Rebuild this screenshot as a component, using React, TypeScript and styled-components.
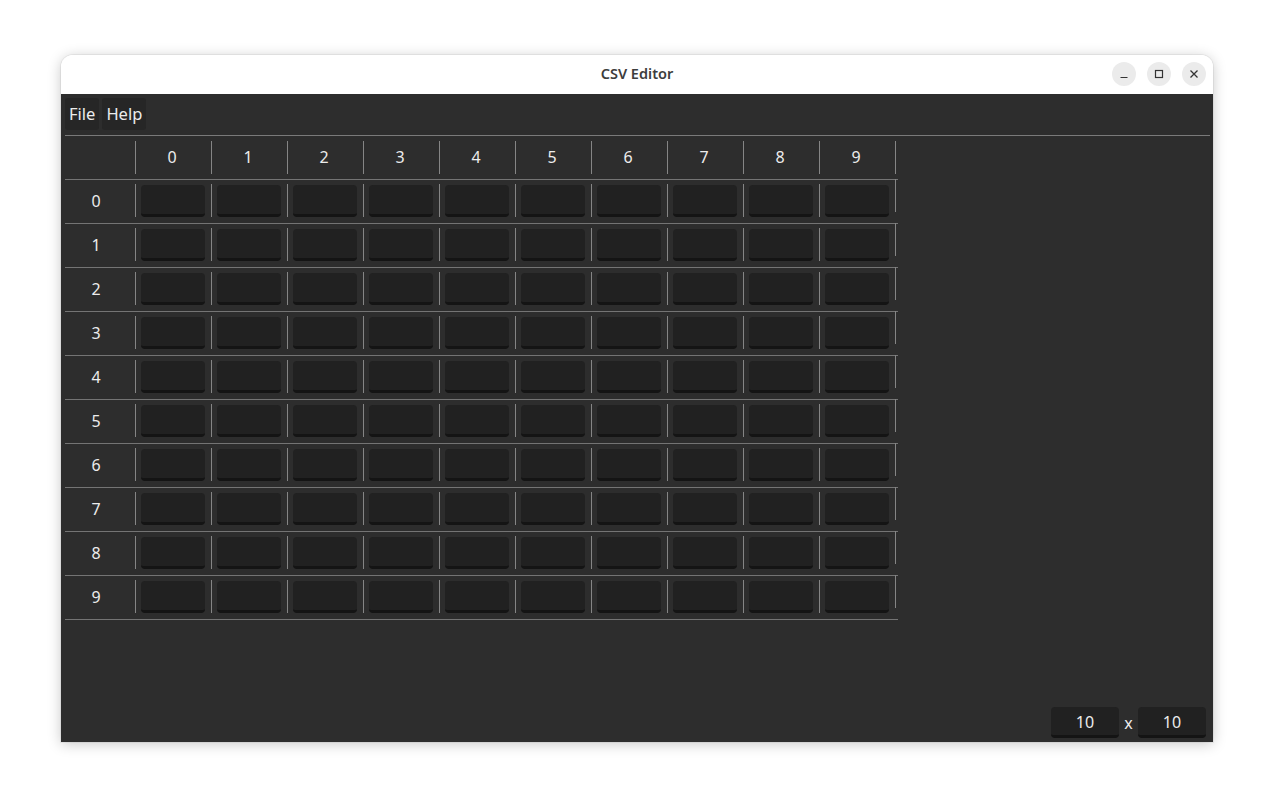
import React from "react";
import styled, { createGlobalStyle } from "styled-components";

const Global = createGlobalStyle`
  html, body { margin: 0; padding: 0; background: #ffffff; }
  body { font-family: "Noto Sans", "Open Sans", sans-serif; }
`;

const Page = styled.div`
  width: 1274px;
  height: 809px;
  padding: 55px 0 0 61px;
  box-sizing: border-box;
`;

const Window = styled.div`
  width: 1152px;
  height: 687px;
  display: flex;
  flex-direction: column;
  border-radius: 12px 12px 0 0;
  overflow: hidden;
  box-shadow: 0 2px 14px rgba(0, 0, 0, 0.22), 0 0 0 1px rgba(0, 0, 0, 0.05);
`;

const TitleBar = styled.div`
  height: 39px;
  flex: none;
  background: #ffffff;
  display: flex;
  align-items: center;
  justify-content: center;
  position: relative;
`;

const Title = styled.div`
  font-family: "Noto Sans", sans-serif;
  font-weight: 600;
  font-size: 14.5px;
  color: #3d3d3d;
  margin-top: -4px;
`;

const Controls = styled.div`
  position: absolute;
  right: 7px;
  top: 7px;
  display: flex;
  gap: 11px;
`;

const CtrlBtn = styled.div`
  width: 24px;
  height: 24px;
  border-radius: 50%;
  background: #ebebeb;
  display: flex;
  align-items: center;
  justify-content: center;
`;

const Content = styled.div`
  flex: 1;
  background: #2d2d2d;
  display: flex;
  flex-direction: column;
  padding: 4px 3px 4px 4px;
  color: #ececec;
`;

const MenuBar = styled.div`
  display: flex;
  gap: 3px;
  height: 32px;
`;

const MenuBtn = styled.div`
  background: #262626;
  border-radius: 3px;
  padding: 0 4px 2px;
  height: 32px;
  box-sizing: border-box;
  display: flex;
  align-items: center;
  font-size: 16.5px;
  color: #ececec;
`;

const Separator = styled.div`
  height: 1px;
  background: #7a7a7a;
  margin-top: 5px;
`;

const Table = styled.div`
  width: 833px;
  display: flex;
  flex-direction: column;
`;

const Row = styled.div`
  display: flex;
  align-items: center;
  height: 43px;
  border-bottom: 1px solid #747474;
`;

const RowHead = styled.div`
  width: 70px;
  text-align: center;
  font-size: 16px;
  padding: 0 8px 2px 0;
  box-sizing: border-box;
`;

const Cell = styled.div<{ $head?: boolean }>`
  width: 76px;
  height: 43px;
  display: flex;
  align-items: ${(p) => (p.$head ? "center" : "flex-start")};
  padding-top: ${(p) => (p.$head ? "0" : "5px")};
  box-sizing: border-box;
`;

const VLine = styled.div<{ $head?: boolean }>`
  width: 1px;
  height: 33px;
  background: #858585;
  flex: none;
  align-self: ${(p) => (p.$head ? "center" : "flex-start")};
  margin-top: ${(p) => (p.$head ? "0" : "-1px")};
`;

const HeadLabel = styled.div`
  flex: 1;
  text-align: center;
  font-size: 16px;
  padding: 0 3px 2px 0;
`;

const Input = styled.div`
  width: 64px;
  height: 29px;
  margin-left: 5px;
  background: #212121;
  border-radius: 4px;
  border-bottom: 3px solid #141414;
  flex: none;
`;

const Spacer = styled.div`
  flex: 1;
`;

const BottomBar = styled.div`
  display: flex;
  justify-content: flex-end;
  align-items: center;
  margin-right: 4px;
`;

const SizeInput = styled.div`
  width: 68px;
  height: 28px;
  padding-top: 1px;
  box-sizing: border-box;
  height: 31px;
  background: #212121;
  border-radius: 4px;
  border-bottom: 3px solid #141414;
  display: flex;
  align-items: center;
  justify-content: center;
  font-size: 16px;
  color: #ececec;
`;

const Times = styled.div`
  width: 19px;
  text-align: center;
  font-size: 16px;
  color: #ececec;
`;

const cols = Array.from({ length: 10 }, (_, i) => i);

export default function App() {
  return (
    <>
      <Global />
      <Page>
        <Window>
          <TitleBar>
            <Title>CSV Editor</Title>
            <Controls>
              <CtrlBtn>
                <svg width="12" height="12" viewBox="0 0 12 12">
                  <path d="M2.5 9.5h7" stroke="#333" strokeWidth="1.2" />
                </svg>
              </CtrlBtn>
              <CtrlBtn>
                <svg width="12" height="12" viewBox="0 0 12 12">
                  <rect x="2.5" y="2.5" width="7" height="7" fill="none" stroke="#333" strokeWidth="1.2" />
                </svg>
              </CtrlBtn>
              <CtrlBtn>
                <svg width="12" height="12" viewBox="0 0 12 12">
                  <path d="M2.5 2.5l7 7M9.5 2.5l-7 7" stroke="#333" strokeWidth="1.3" />
                </svg>
              </CtrlBtn>
            </Controls>
          </TitleBar>
          <Content>
            <MenuBar>
              <MenuBtn>File</MenuBtn>
              <MenuBtn>Help</MenuBtn>
            </MenuBar>
            <Separator />
            <Table>
              <Row>
                <RowHead />
                {cols.map((c) => (
                  <Cell key={c} $head>
                    <VLine $head />
                    <HeadLabel>{c}</HeadLabel>
                  </Cell>
                ))}
                <VLine $head />
              </Row>
              {cols.map((r) => (
                <Row key={r}>
                  <RowHead>{r}</RowHead>
                  {cols.map((c) => (
                    <Cell key={c}>
                      <VLine />
                      <Input />
                    </Cell>
                  ))}
                  <VLine />
                </Row>
              ))}
            </Table>
            <Spacer />
            <BottomBar>
              <SizeInput>10</SizeInput>
              <Times>x</Times>
              <SizeInput>10</SizeInput>
            </BottomBar>
          </Content>
        </Window>
      </Page>
    </>
  );
}
